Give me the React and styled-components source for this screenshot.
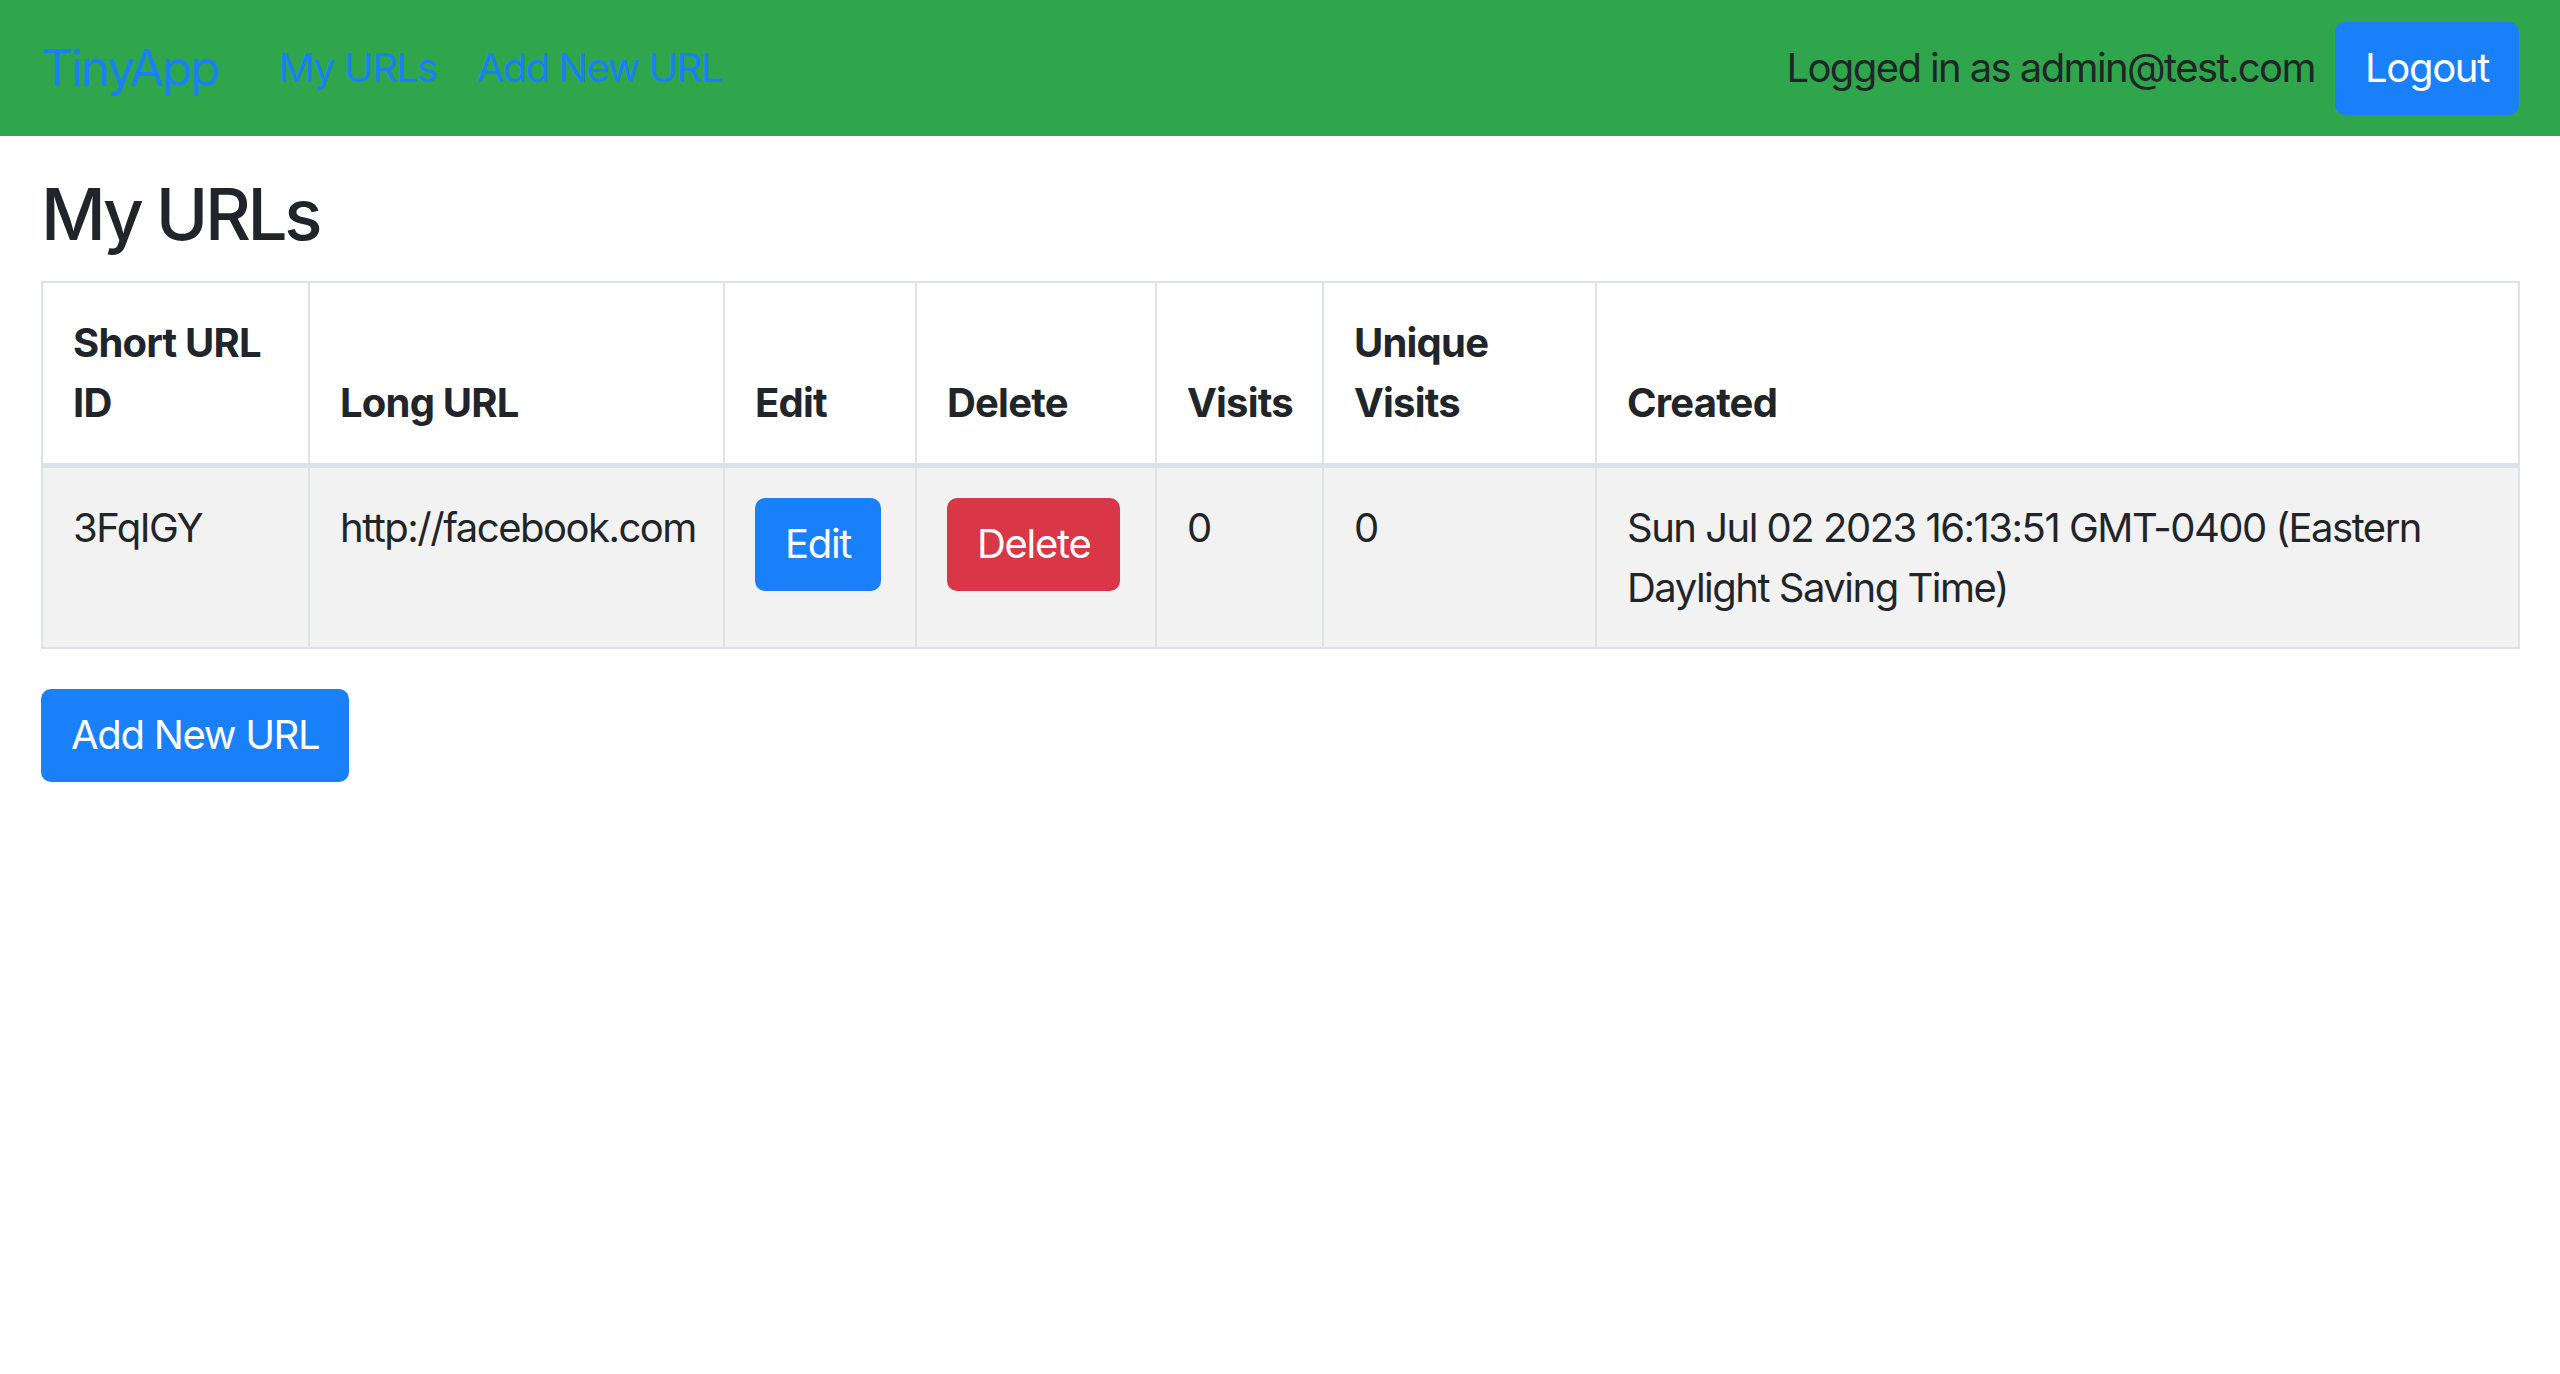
import React from 'react'
import styled, { createGlobalStyle } from 'styled-components'

const GlobalStyle = createGlobalStyle`
  html, body {
    margin: 0;
    padding: 0;
    background: #fff;
  }
  body {
    font-family: Inter, "Noto Sans", "Liberation Sans", sans-serif;
    font-size: 40px;
    line-height: 1.5;
    color: #212529;
  }
  * { box-sizing: border-box; }
`

const Navbar = styled.nav`
  display: flex;
  align-items: center;
  height: 136px;
  padding: 0 41px;
  background: #2fa64c;
`

const Brand = styled.a`
  font-size: 50px;
  line-height: 75px;
  color: #1a80fa;
  text-decoration: none;
  margin-right: 40px;
  letter-spacing: -2.3px;
`

const NavLinks = styled.div`
  display: flex;
  flex: 1;
`

const NavLink = styled.a`
  padding: 0 20px;
  color: #1a80fa;
  text-decoration: none;
  letter-spacing: -1.6px;
`

const UserInfo = styled.span`
  margin-right: 20px;
  color: #212529;
  letter-spacing: -1.6px;
`

const Button = styled.button`
  font-family: inherit;
  font-size: 40px;
  line-height: 60px;
  padding: 16px 30px 17px;
  border: none;
  border-radius: 10px;
  color: #fff;
  letter-spacing: -1.3px;
  background: ${p => (p.$variant === 'danger' ? '#d93748' : '#1a80fa')};
  cursor: pointer;
`

const Main = styled.main`
  padding: 30px 40px 0 41px;
`

const Title = styled.h2`
  margin: 0 0 19px;
  font-size: 71px;
  font-weight: 500;
  line-height: 96px;
  letter-spacing: -3.4px;
`

const Table = styled.table`
  width: 100%;
  table-layout: fixed;
  border-collapse: collapse;
  border: 2px solid #dee2e6;
  margin-bottom: 40px;
`

const Th = styled.th`
  padding: 30px;
  text-align: left;
  vertical-align: bottom;
  font-weight: 700;
  letter-spacing: -0.8px;
  border: 2px solid #dee2e6;
  border-bottom-width: 5px;
`

const Row = styled.tr`
  background: #f2f2f2;
`

const Td = styled.td`
  padding: 30px 30px 29px;
  vertical-align: top;
  letter-spacing: -1.5px;
  border: 2px solid #dee2e6;
`

const columns = [
  { title: <>Short URL<br />ID</>, width: 267 },
  { title: 'Long URL', width: 415 },
  { title: 'Edit', width: 192 },
  { title: 'Delete', width: 240 },
  { title: 'Visits', width: 167 },
  { title: <>Unique<br />Visits</>, width: 273 },
  { title: 'Created' },
]

const urls = [
  {
    id: '3FqIGY',
    longURL: 'http://facebook.com',
    visits: 0,
    unique: 0,
    created: 'Sun Jul 02 2023 16:13:51 GMT-0400 (Eastern Daylight Saving Time)',
  },
]

function App() {
  return (
    <>
      <GlobalStyle />
      <Navbar>
        <Brand href="#">TinyApp</Brand>
        <NavLinks>
          <NavLink href="#">My URLs</NavLink>
          <NavLink href="#">Add New URL</NavLink>
        </NavLinks>
        <UserInfo>Logged in as admin@test.com</UserInfo>
        <Button>Logout</Button>
      </Navbar>
      <Main>
        <Title>My URLs</Title>
        <Table>
          <colgroup>
            {columns.map((c, i) => (
              <col key={i} style={c.width ? { width: c.width } : undefined} />
            ))}
          </colgroup>
          <thead>
            <tr>
              {columns.map((c, i) => (
                <Th key={i}>{c.title}</Th>
              ))}
            </tr>
          </thead>
          <tbody>
            {urls.map(u => (
              <Row key={u.id}>
                <Td>{u.id}</Td>
                <Td>{u.longURL}</Td>
                <Td><Button>Edit</Button></Td>
                <Td><Button $variant="danger">Delete</Button></Td>
                <Td>{u.visits}</Td>
                <Td>{u.unique}</Td>
                <Td>{u.created}</Td>
              </Row>
            ))}
          </tbody>
        </Table>
        <Button>Add New URL</Button>
      </Main>
    </>
  )
}

export default App
